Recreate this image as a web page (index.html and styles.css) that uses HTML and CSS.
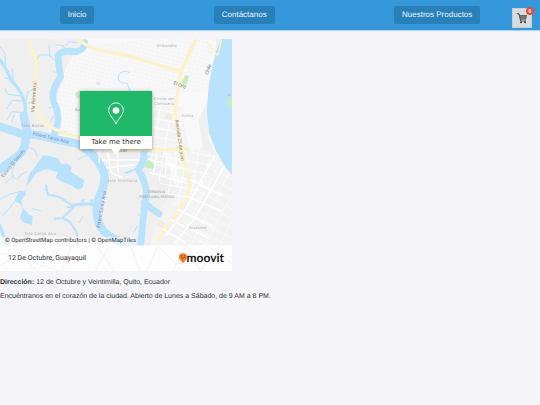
FILE: index.html
```html
<!DOCTYPE html>
<html lang="es">
<head>
<meta charset="utf-8">
<meta name="viewport" content="width=device-width, initial-scale=1">
<title>Contáctanos</title>
<link rel="stylesheet" href="styles.css">
</head>
<body>
<header class="header">
  <nav class="nav">
    <a class="nav-link" href="#">Inicio</a>
    <a class="nav-link" href="#">Contáctanos</a>
    <a class="nav-link" href="#">Nuestros Productos</a>
  </nav>
  <button class="cart" type="button" aria-label="Carrito">
    <svg class="cart-icon" viewBox="0 0 36 36" aria-hidden="true">
      <path d="M3 5h6l2 4h22l-3 14H12L9 9" fill="#666"/>
      <path d="M2 5h7l5 22h16" fill="none" stroke="#444" stroke-width="2.5"/>
      <path d="M12 13h18M13 18h16M17 10v12M23 10v12" stroke="#999" stroke-width="1"/>
      <circle cx="15" cy="31" r="3" fill="#333"/><circle cx="27" cy="31" r="3" fill="#333"/>
    </svg>
    <span class="badge">0</span>
  </button>
</header>
<main class="content">
  <a class="map" href="#">
    <svg class="map-art" viewBox="0 9 696 696" aria-hidden="true">
      <defs>
        <pattern id="blocks" width="13" height="12" patternUnits="userSpaceOnUse" patternTransform="rotate(13)">
          <path d="M0 0H13M0 0V12" stroke="#eeeef0" stroke-width="2"/>
        </pattern>
        <pattern id="streets" width="34" height="27" patternUnits="userSpaceOnUse" patternTransform="rotate(10)">
          <path d="M0 0H34M0 0V27" stroke="#fff" stroke-width="4"/>
        </pattern>
        <pattern id="diagonal" width="38" height="26" patternUnits="userSpaceOnUse" patternTransform="rotate(28)">
          <path d="M0 0H38M0 0V26" stroke="#fff" stroke-width="3"/>
        </pattern>
      </defs>
      <path fill="#efefef" d="M0 9h696v620H0z"/>
      <path fill="#f8f8f9" d="M250 9h400l-25 180 8 120 63 110v80l-90 50-70-70-45-130-75-10-75 10-100-20-60-10-15-110 30-110z"/>
      <path fill="url(#blocks)" d="M240 30 460 9h185l-20 150-90 20-80-15-20 160-200-20-75-20 10-130z"/>
      <path fill="#f3f3f4" d="M460 210h80l30 140 66-30 60 105v203H450l30-110 60-75-25-90-55-10z"/>
      <path fill="url(#streets)" d="M450 200h90l20 160 70-50 15 70-60 110-60 20-90-140z"/>
      <path fill="url(#diagonal)" d="m570 480 70-120 56 60v209H510z"/>
      <path fill="#efefef" d="M625 190v120l18 45-35-15-12-90z"/>
      <path fill="#d9e8cd" d="m224 173 16-12v27l-10-2z"/>
      <path fill="#c5edbf" d="m555 118 12 2-8 32-15-4zM434 381l12-10 21 16-8 11-25-5z"/>
      <path fill="#ececdf" d="m496 232 22 3-5 16-20-3zM475 552l20 8-7 15-18-8z"/>
      <path fill="#f2e1e5" d="m293 136 8 4-5 9-8-5z"/>

      <path class="water-fill" d="M665 9h31v408l-22-26-25-45-22-55-6-65 5-75 11-60 13-50z"/>
      <path fill="#c4edc9" d="M696 180q-22 9-11 32l11 8z"/>
      <path class="water w18" d="M254 20q-3 23-25 27-45-6-55 11 2 35 8 65-29 38-22 72 20 40 12 70-8 23-12 40"/>
      <path class="water w24" d="M0 272q35 11 72 24 45-2 85 12l76 15q50 29 68 65 25 38 2 83-23 44-6 91 10 26 42 45l60 25"/>
      <path class="water w24" d="M78 300q0 37-21 57L0 400M83 294l-12-55"/>
      <path class="water w10" d="M0 72q19 25 34 61 35 35 42 77l2 68M0 570l21 57M218 508q45-9 79 0"/>
      <path class="water w18" d="M432 350q-1 34-17 50 34 60 20 97l-13 130M433 500q15 10 22 19l22 14"/>
      <path class="water w6" d="M412 398l-34 13M138 448l6 28q38 3 53 20l26 15-36 35 23 12 20 31 4 40M182 547l-17 1M224 511l-21 3M275 492v17M250 492l-5 16"/>
      <path class="water w3" d="M0 32l15 20 1 45M40 133l-25-8M39 130l-2-30M65 180l-42-5-7-17M75 210l8-42 16-8M72 195l-35-2-17 25M76 231l-41-4-13 24M43 237l-8 21M101 196l-16 6M230 20l-23-3-9 11M199 48l-9-19-22-2M167 77l-18-20-29 0-8 12M149 62l-2-34M182 110l-21-2M162 177l-15-7M162 213l-15 3M160 240l-10 21M183 273l-17-5M198 287l-20 6M79 330l25 12 8 18M45 382l-11 31 10 15M40 419l-24 22M79 407l-17 10-10 12M69 465l-36 8-33 17M53 486l-35 43-9 8M98 518l24 7M239 338l21-12M265 356l-32 14M316 415l12-13M140 467l-8-8M250 540l-13 20"/>
      <path class="water w3" d="M389 164l-7-22q-31 3-27-23 10-19 34-10M388 163l5 12M433 372l16-13M427 550l-13-18M412 570l-10 18M456 522l-13-19"/>
      <path class="water-fill" d="m88 414 22-28 18-28 23 2 24 8 8 15 20 0 12 9-3 15 40 25-3 21-14 8-25-15-21-7-22-14 6-16-34-10-31 12-16 25-16 18 1 21-13 19 2 20 22 22 10 5-2 25-28-7-8-15 8-22-6-18-19-9 12-25 19-4z"/>

      <path class="road edge" d="m86 9 23 72-5 119q10 46 36 67l54 26 48 10M235 9q26 25 60 33l108 22 74 24 69 18M588 9l-46 99-17 122 13 90 28 105q3 40-2 57l-90 128M350 340h215"/>
      <path class="road" d="m86 9 23 72-5 119q10 46 36 67l54 26 48 10M235 9q26 25 60 33l108 22 74 24 69 18M588 9l-46 99-17 122 13 90 28 105q3 40-2 57l-90 128M350 340h215"/>
      <path class="road minor" d="M620 18l33 41 12-46"/>
      <path class="street" d="M299 345l-2 35M323 350l10 60 35 15M352 350l3 60M306 372h110M320 395l80-8M447 370l117 30M450 410l110 32M470 350l-10 65M500 350l-4 70M530 350l-5 78M570 430l95 49M557 480l105 44M532 520l108 50M510 550l112 54M490 580l67 39M643 360l-85 158-59 79M673 390l-87 155-60 75"/>
      <g class="place">
        <text x="470" y="33">Urdaneta</text>
        <text x="461" y="193">Cristo del</text><text x="463" y="208">Consuelo</text>
        <text x="545" y="244">Salha</text><text x="64" y="273">Tres Bocas</text>
        <text x="324" y="438">Isla Trinitaria</text><text x="567" y="578">Guasmo</text>
        <text x="75" y="596">Isla Santa Ana</text><text x="224" y="226">Ba</text><text x="684" y="181">A</text>
      </g>
      <g class="terminal"><text x="443" y="471">TERMINAL</text><text x="418" y="485">PORTUARIA FERTISA</text></g>
      <g class="road-name">
        <text transform="translate(103 229) rotate(-86)">Vía Perimetral</text>
        <text transform="translate(519 144) rotate(22)">El Oro</text>
        <text transform="translate(623 117) rotate(-70)">Chile</text>
        <text transform="translate(526 252) rotate(82)">Avenida 25 de Julio</text>
        <text x="358" y="349">tral</text>
      </g>
      <g class="water-name">
        <text transform="translate(97 296) rotate(14)">Estero Santa Ana</text>
        <text transform="translate(10 425) rotate(-51)">Estero El Salado</text>
        <text transform="translate(299 576) rotate(-80)">Estero Santa Ana</text>
      </g>
      <path fill="#fdfdfd" d="M0 628h696v77H0z"/>
      <path d="M0 690l65-42 20-20M40 628l70 77M110 705l70-77M185 705l30-77M0 650l180 55M290 628l50 77M330 628l-45 77M390 628l30 77M440 705l35-77 70 77M560 628l40 77 60-77M520 705l40-77M620 628l76 55" fill="none" stroke="#f6f6f7" stroke-width="4"/>
    </svg>
    <span class="marker">
      <span class="marker-top">
        <svg class="pin" viewBox="0 0 48 68" aria-hidden="true"><path d="M24 65C18 51 2 38 2 24a22 22 0 0 1 44 0c0 14-16 27-22 41z" fill="none" stroke="#e9fff1" stroke-width="3"/><circle cx="24" cy="25" r="10" fill="#fff"/></svg>
      </span>
      <span class="marker-label">Take me there</span>
    </span>
    <span class="map-bottom">
      <span class="credits">© OpenStreetMap contributors | © OpenMapTiles</span>
      <span class="map-footer">
        <span>12 De Octubre, Guayaquil</span>
        <span class="brand">
          <svg class="brand-pin" viewBox="0 0 24 32" aria-hidden="true"><path d="M12 31C9 25 0 21 0 11a12 11 0 0 1 24 0c0 10-9 14-12 20z" fill="#f47b20"/><path d="M6 12q6 8 12 0" fill="none" stroke="#70350c" stroke-width="2"/><circle cx="8" cy="8" r="1.5" fill="#70350c"/><circle cx="16" cy="8" r="1.5" fill="#70350c"/></svg>
          <span>moovit</span>
        </span>
      </span>
    </span>
  </a>
  <p class="info"><strong>Dirección:</strong> 12 de Octubre y Veintimilla, Quito, Ecuador</p>
  <p class="info">Encuéntranos en el corazón de la ciudad. Abierto de Lunes a Sábado, de 9 AM a 8 PM.</p>
</main>
</body>
</html>
```

FILE: styles.css
```css
* { box-sizing: border-box; }

body {
  margin: 0;
  background: #f4f4f9;
  color: #333;
  font-family: "Liberation Sans", Arial, sans-serif;
  text-rendering: geometricPrecision;
}

.header {
  position: relative;
  padding: 6px 0;
  background: #3498db;
  box-shadow: 0 1px 1px #b5d6ef;
}

.nav { display: flex; justify-content: space-around; }

.nav-link {
  padding: 0 8px;
  border-radius: 2px;
  background: #2980b9;
  color: #ecf5fb;
  font-size: 8px;
  line-height: 18px;
  text-decoration: none;
}

.cart {
  position: absolute;
  top: 8px;
  right: 8px;
  display: flex;
  align-items: center;
  justify-content: center;
  width: 20px;
  height: 20px;
  padding: 0;
  border: 1px solid #c8d0d5;
  background: #d9dcde;
}

.cart-icon { width: 12px; height: 12px; }

.badge {
  position: absolute;
  top: -2px;
  right: -3px;
  width: 8px;
  height: 8px;
  border-radius: 50%;
  background: #e74c3c;
  color: #fff;
  font-size: 5px;
  font-weight: bold;
  line-height: 8px;
  text-align: center;
}

.content { padding-top: 9px; }

.map {
  position: relative;
  display: block;
  width: 232px;
  max-width: 100%;
  margin-bottom: 8px;
  overflow: hidden;
  color: #333;
  text-decoration: none;
}

.map-art { display: block; width: 100%; }
.water, .street, .road { fill: none; stroke-linejoin: round; stroke-linecap: round; }
.water { stroke: #b9e2fd; }
.water-fill { fill: #b9e2fd; }
.w3 { stroke-width: 3px; }
.w6 { stroke-width: 6px; }
.w10 { stroke-width: 10px; }
.w18 { stroke-width: 20px; }
.w24 { stroke-width: 25px; }
.road { stroke: #fff3bf; stroke-width: 6px; }
.road.edge { stroke: #f8f2e0; stroke-width: 10px; }
.road.minor { stroke-width: 4px; }
.street { stroke: #fff; stroke-width: 4px; }
.place, .terminal, .road-name, .water-name { font-family: "Noto Sans", sans-serif; }
.place { fill: #aaa; font-size: 12px; letter-spacing: 1px; }
.terminal { fill: #999; font-size: 11px; }
.road-name { fill: #777; font-size: 14px; }
.water-name { fill: #7d83c0; font-size: 14px; }

.marker {
  position: absolute;
  top: 52px;
  left: 80px;
  width: 72px;
  background: #fff;
  box-shadow: 0 1px 4px rgba(0, 0, 0, 0.4);
}

.marker::after {
  content: "";
  position: absolute;
  top: 100%;
  left: 31px;
  border: 5px solid transparent;
  border-top-color: #fff;
  border-bottom: 0;
}

.marker-top {
  display: flex;
  align-items: center;
  justify-content: center;
  height: 45px;
  background: #20b869;
}

.pin { width: 16px; height: 23px; }

.marker-label {
  display: block;
  font-family: "DejaVu Sans", sans-serif;
  font-size: 7px;
  line-height: 13px;
  text-align: center;
}

.map-bottom {
  position: absolute;
  right: 0;
  bottom: 0;
  left: 0;
  font-family: Roboto, sans-serif;
}

.credits {
  display: block;
  width: fit-content;
  padding: 0 0 0 5px;
  background: rgba(255, 255, 255, 0.6);
  font-size: 6px;
  line-height: 8px;
}

.map-footer {
  display: flex;
  align-items: center;
  justify-content: space-between;
  height: 26px;
  padding: 0 8px;
  font-size: 7px;
}

.brand {
  display: flex;
  align-items: center;
  color: #151515;
  font-family: Lato, sans-serif;
  font-size: 12px;
  font-weight: 700;
  line-height: 14px;
}

.brand-pin { width: 8px; height: 11px; }

.info {
  margin: 0 0 6px;
  font-size: 7px;
  line-height: 8px;
}
```
